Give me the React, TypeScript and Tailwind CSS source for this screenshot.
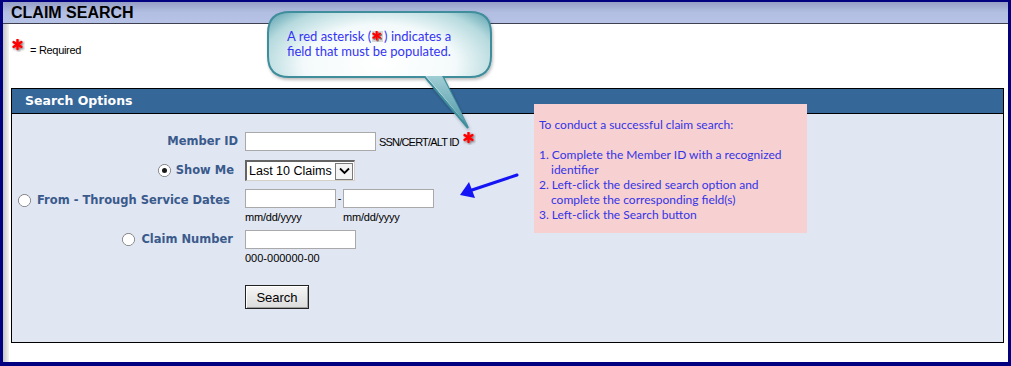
import React from "react";

const arial = { fontFamily: '"Liberation Sans", Arial, sans-serif' };
const verdana = { fontFamily: '"DejaVu Sans", Verdana, sans-serif' };
const calibri = { fontFamily: 'Lato, "Open Sans", sans-serif' };

function Radio({ checked = false }: { checked?: boolean }) {
  return (
    <span className="relative inline-flex w-[13px] h-[13px] shrink-0 rounded-full border border-[#7a7a7a] bg-gradient-to-br from-[#dcdcdc] to-white items-center justify-center">
      <span className="w-[11px] h-[11px] rounded-full bg-white flex items-center justify-center">
        {checked && <span className="w-[5px] h-[5px] rounded-full bg-[#1a1a1a]" />}
      </span>
    </span>
  );
}

function Star({ size = 11 }: { size?: number }) {
  return (
    <svg width={size + 2} height={size + 2} viewBox="0 0 13 13" className="shrink-0">
      <defs>
        <filter id="starsh" x="-30%" y="-30%" width="170%" height="170%">
          <feDropShadow dx="1.2" dy="1.2" stdDeviation="0.9" floodColor="#555" floodOpacity="0.8" />
        </filter>
      </defs>
      <g stroke="#ff0000" strokeWidth="2.6" strokeLinecap="round" filter="url(#starsh)">
        <line x1="5.5" y1="1" x2="5.5" y2="10" />
        <line x1="1.6" y1="3.2" x2="9.4" y2="7.8" />
        <line x1="1.6" y1="7.8" x2="9.4" y2="3.2" />
      </g>
    </svg>
  );
}

function TextInput({ w }: { w: string }) {
  return <div className={`${w} h-[19px] bg-white border border-[#a9a9a9]`} />;
}

export default function App() {
  const label = "text-[11.5px] font-bold text-[#3a5a8c] leading-none whitespace-nowrap";
  return (
    <div className="relative w-[1011px] h-[366px] bg-white overflow-hidden border-t-2 border-l-[3px] border-r-[3px] border-b-4 border-[#000080] flex flex-col">
      {/* title bar */}
      <div className="h-[22px] shrink-0 border-b border-[#3f4050] bg-gradient-to-b from-[#969ec6] via-[#b2bfe2] to-[#b6c3e6] flex items-center pl-[8px]">
        <span className="text-[16px] font-bold text-black leading-none" style={arial}>
          CLAIM SEARCH
        </span>
      </div>

      <div className="flex flex-1">
        {/* left shade strip */}
        <div className="w-[6px] shrink-0 bg-gradient-to-r from-[#c4c4c4] to-[#f2f2f2]" />

        <div className="flex-1 flex flex-col">
          <div className="h-[64px] flex items-start pt-[15px] pl-[3px] gap-[5px]">
            <Star size={11} />
            <span className="text-[11px] text-black leading-none mt-[6px] tracking-[-0.3px]" style={arial}>
              = Required
            </span>
          </div>

          {/* Search options panel */}
          <div className="ml-[2px] mr-[4px] border border-black bg-[#e0e6f2] flex flex-col">
            <div className="h-[25px] bg-[#356799] border-b border-black flex items-center pl-[13px]">
              <span className="text-[12.5px] font-bold text-white leading-none" style={verdana}>
                Search Options
              </span>
            </div>

            <div className="flex flex-col pt-[18px] pb-[33px]">
              {/* Member ID */}
              <div className="flex items-center h-[19px]">
                <div className="w-[226px] flex justify-end" style={verdana}>
                  <span className={label}>Member ID</span>
                </div>
                <div className="ml-[7px] flex items-center">
                  <TextInput w="w-[131px]" />
                  <span className="ml-[3px] mt-[2px] text-[11px] text-black leading-none tracking-[-0.8px]" style={arial}>
                    SSN/CERT/ALT ID
                  </span>
                  <span className="ml-[4px] -mt-[6px]">
                    <Star size={11} />
                  </span>
                </div>
              </div>

              {/* Show Me */}
              <div className="flex items-center h-[21px] mt-[9px]">
                <div className="w-[226px] flex justify-end items-center gap-[5px] pr-[4px]" style={verdana}>
                  <Radio checked />
                  <span className={label}>Show Me</span>
                </div>
                <div className="ml-[7px] w-[110px] h-[21px] border-t-2 border-l-2 border-[#646464] border-b border-r border-b-[#d4d0c8] border-r-[#d4d0c8] bg-white flex items-center overflow-hidden">
                  <span className="flex-1 pl-[2px] text-[12.5px] text-black leading-none whitespace-nowrap overflow-hidden" style={arial}>
                    Last 10 Claims
                  </span>
                  <span className="w-[18px] h-[17px] mr-[1px] shrink-0 bg-[#f4f4f4] border border-[#7a7a7a] flex items-center justify-center">
                    <svg width="11" height="8" viewBox="0 0 11 8">
                      <path d="M1 1.5 L5.5 6 L10 1.5" fill="none" stroke="#000" strokeWidth="1.8" />
                    </svg>
                  </span>
                </div>
              </div>

              {/* From - Through */}
              <div className="flex items-start mt-[8px]">
                <div className="w-[226px] flex items-center gap-[6px] pl-[6px] h-[19px] mt-[2px]" style={verdana}>
                  <Radio />
                  <span className={label}>From - Through Service Dates</span>
                </div>
                <div className="ml-[7px] flex flex-col">
                  <div className="flex items-center">
                    <TextInput w="w-[91px]" />
                    <span className="w-[7px] text-[11px] text-black leading-none text-center" style={arial}>
                      -
                    </span>
                    <TextInput w="w-[91px]" />
                  </div>
                  <div className="flex mt-[3px]">
                    <span className="w-[98px] text-[11px] text-black leading-[12px] tracking-[-0.2px]" style={arial}>
                      mm/dd/yyyy
                    </span>
                    <span className="text-[11px] text-black leading-[12px] tracking-[-0.2px]" style={arial}>
                      mm/dd/yyyy
                    </span>
                  </div>
                </div>
              </div>

              {/* Claim Number */}
              <div className="flex items-start mt-[7px]">
                <div className="w-[226px] flex justify-end items-center gap-[6px] h-[19px] pr-[5px]" style={verdana}>
                  <Radio />
                  <span className={label}>Claim Number</span>
                </div>
                <div className="ml-[7px] flex flex-col">
                  <TextInput w="w-[111px]" />
                  <span className="mt-[3px] text-[11px] text-black leading-[12px]" style={arial}>
                    000-000000-00
                  </span>
                </div>
              </div>

              {/* Search button */}
              <div className="flex mt-[21px]">
                <div className="w-[226px]" />
                <div className="ml-[7px] w-[64px] h-[24px] border border-[#222] bg-gradient-to-b from-[#f6f6f6] to-[#dcdcdc] shadow-[inset_1px_1px_0_#fff,inset_-1px_-1px_0_#a0a0a0] flex items-center justify-center">
                  <span className="text-[13px] text-black leading-none" style={arial}>
                    Search
                  </span>
                </div>
              </div>
            </div>
          </div>
        </div>
      </div>

      {/* Callout bubble */}
      <svg className="absolute left-[-3px] top-[-2px] pointer-events-none" width="1011" height="366">
        <defs>
          <radialGradient id="bub" cx="50%" cy="45%" r="62%">
            <stop offset="0" stopColor="#ffffff" />
            <stop offset="0.55" stopColor="#f4fafb" />
            <stop offset="0.85" stopColor="#b6dade" />
            <stop offset="1" stopColor="#75b1bd" />
          </radialGradient>
          <linearGradient id="tail" x1="0" y1="0" x2="0" y2="1">
            <stop offset="0" stopColor="#9fcdd4" />
            <stop offset="1" stopColor="#4e97a6" />
          </linearGradient>
          <filter id="sh" x="-10%" y="-10%" width="130%" height="140%">
            <feDropShadow dx="1" dy="2" stdDeviation="1.5" floodColor="#000" floodOpacity="0.25" />
          </filter>
        </defs>
        <path
          d="M290 12 H470 Q491 12 491 33 V56 Q491 77 470 77 H443 L468 128 L425 77 H289 Q268 77 268 56 V33 Q268 12 290 12 Z"
          fill="url(#bub)"
          stroke="#3f8e9c"
          strokeWidth="2"
          filter="url(#sh)"
        />
        <path d="M426 76 L468 126 L442 76 Z" fill="url(#tail)" />
        {/* blue arrow */}
        <line x1="517" y1="175" x2="472" y2="190" stroke="#1414f5" strokeWidth="3" strokeLinecap="round" />
        <polygon points="460,195 469,182 475,198" fill="#1414f5" />
      </svg>
      <div
        className="absolute left-[284px] top-[27px] text-[13px] leading-[15px] text-[#3434f4] w-[200px]"
        style={calibri}
      >
        <div className="flex items-center whitespace-nowrap">
          A red asterisk (
          <span className="inline-flex bg-[#d6d6d6] mx-[1px]">
            <Star size={9} />
          </span>
          ) indicates a
        </div>
        <div>field that must be populated.</div>
      </div>

      {/* instructions note */}
      <div
        className="absolute left-[531px] top-[102px] w-[273px] h-[129px] bg-[#f7d0d1] pt-[13px] pl-[5px] text-[12px] leading-[15px] text-[#3434e6]"
        style={calibri}
      >
        <div>To conduct a successful claim search:</div>
        <div className="h-[15px]" />
        <div>1. Complete the Member ID with a recognized</div>
        <div className="pl-[12px]">identifier</div>
        <div>2. Left-click the desired search option and</div>
        <div className="pl-[12px]">complete the corresponding field(s)</div>
        <div>3. Left-click the Search button</div>
      </div>
    </div>
  );
}
